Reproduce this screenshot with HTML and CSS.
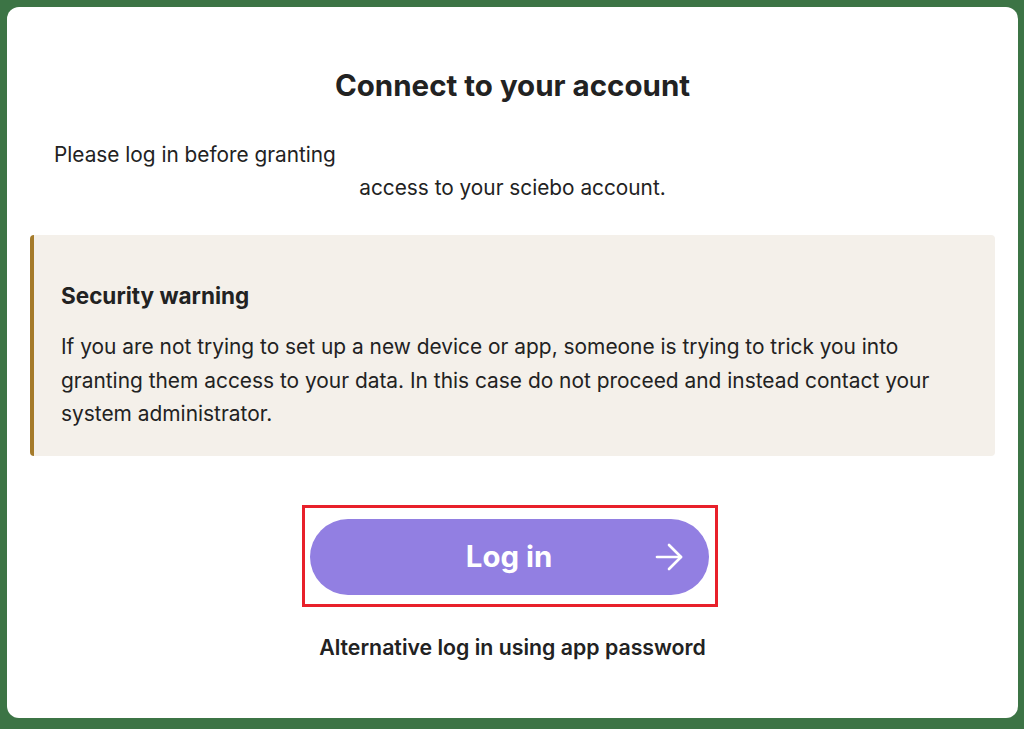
FILE: index.html
```html
<!DOCTYPE html>
<html lang="en">
<head>
    <meta charset="UTF-8">
    <meta name="viewport" content="width=device-width, initial-scale=1.0">
    <title>Connect to your account</title>
    <link rel="stylesheet" href="styles.css">
</head>
<body>

<div class="card">
    <h2 class="title">Connect to your account</h2>

    <p class="intro">Please log in before granting</p>
    <p class="intro-center">access to your sciebo account.</p>

    <div class="warning">
        <h3>Security warning</h3>
        <p>If you are not trying to set up a new device or app, someone is trying to trick you into granting them access to your data. In this case do not proceed and instead contact your system administrator.</p>
    </div>

    <div class="highlight">
        <button class="login-button">
            <span>Log in</span>
            <svg class="arrow" width="32" height="32" viewBox="0 0 24 24" fill="none" stroke="#fff" stroke-width="2" stroke-linecap="round" stroke-linejoin="round">
                <path d="M3 12h18"/>
                <path d="M12 3l9 9-9 9"/>
            </svg>
        </button>
    </div>

    <a class="alt-login" href="#">Alternative log in using app password</a>
</div>

</body>
</html>
```

FILE: styles.css
```css
html, body {
    height: 100%;
}
body {
    margin: 0;
    padding: 7px 6px 11px 7px;
    box-sizing: border-box;
    background-color: #3c7445;
    font-family: Inter, "Noto Sans", sans-serif;
    color: #222;
}
.card {
    height: 100%;
    background-color: #fff;
    border-radius: 12px;
    padding: 0 23px;
    box-sizing: border-box;
    display: flex;
    flex-direction: column;
    align-items: center;
}
.title {
    margin: 60px 0 0;
    font-size: 29.5px;
    font-weight: 700;
    line-height: 36px;
}
.intro {
    align-self: flex-start;
    margin: 34.5px 0 0 24px;
    font-size: 20.8px;
    line-height: 33px;
}
.intro-center {
    margin: 0;
    font-size: 20.8px;
    line-height: 33px;
}
.warning {
    align-self: stretch;
    margin-top: 31.5px;
    padding: 45px 54px 25px 27px;
    background-color: #f4f0ea;
    border-left: 4px solid #a57b2b;
    border-radius: 4px;
}
.warning h3 {
    margin: 0 0 18px;
    font-size: 22.5px;
    font-weight: 700;
    line-height: 32px;
}
.warning p {
    margin: 0;
    font-size: 20.9px;
    line-height: 33.5px;
}
.highlight {
    margin: 49px 6px 0 0;
    padding: 11px 6px 9px 5px;
    border: 3px solid #e8202a;
}
.login-button {
    position: relative;
    display: block;
    width: 399px;
    height: 76px;
    border: none;
    border-radius: 38px;
    background-color: #927fe2;
    color: #fff;
    font-family: Inter, "Noto Sans", sans-serif;
    font-size: 29.4px;
    font-weight: 700;
    cursor: pointer;
}
.login-button .arrow {
    position: absolute;
    right: 24px;
    top: 22px;
}
.alt-login {
    margin-top: 27px;
    font-size: 21.3px;
    font-weight: 600;
    color: #222;
    text-decoration: none;
}
```
